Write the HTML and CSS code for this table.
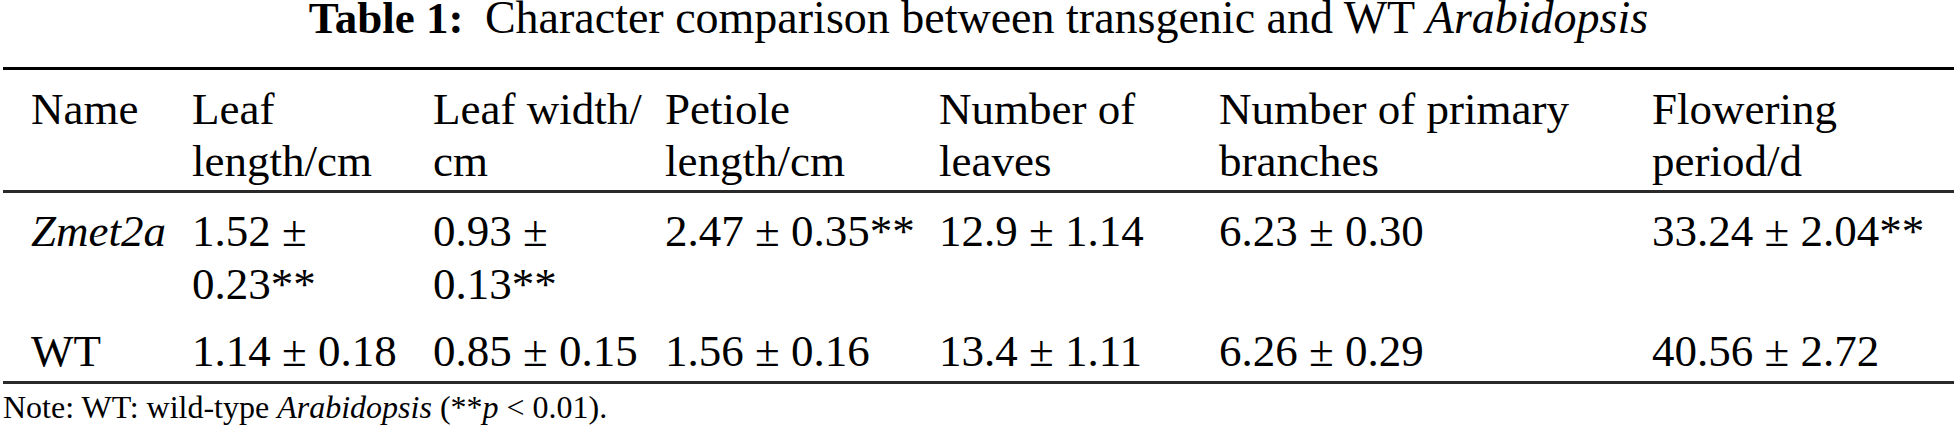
FILE: index.html
```html
<!DOCTYPE html>
<html lang="en">
<head>
  <meta charset="UTF-8">
  <title>Table 1</title>
  <link rel="stylesheet" href="styles.css">
</head>
<body>

  <div class="wrap">
    <h1 class="caption"><b class="label">Table 1:</b> Character comparison between transgenic and WT <i>Arabidopsis</i></h1>

    <table class="traits">
      <colgroup>
        <col class="c-name">
        <col class="c-len">
        <col class="c-wid">
        <col class="c-pet">
        <col class="c-num">
        <col class="c-br">
        <col class="c-fl">
      </colgroup>
      <thead>
        <tr>
          <th>Name</th>
          <th>Leaf length/cm</th>
          <th>Leaf width/ cm</th>
          <th>Petiole length/cm</th>
          <th>Number of leaves</th>
          <th>Number of primary branches</th>
          <th>Flowering period/d</th>
        </tr>
      </thead>
      <tbody>
        <tr>
          <td><i>Zmet2a</i></td>
          <td>1.52 ± 0.23**</td>
          <td>0.93 ± 0.13**</td>
          <td>2.47 ± 0.35**</td>
          <td>12.9 ± 1.14</td>
          <td>6.23 ± 0.30</td>
          <td>33.24 ± 2.04**</td>
        </tr>
        <tr class="last">
          <td>WT</td>
          <td>1.14 ± 0.18</td>
          <td>0.85 ± 0.15</td>
          <td>1.56 ± 0.16</td>
          <td>13.4 ± 1.11</td>
          <td>6.26 ± 0.29</td>
          <td>40.56 ± 2.72</td>
        </tr>
      </tbody>
    </table>

    <p class="note">Note: WT: wild-type <i>Arabidopsis</i> (**<i>p</i> &lt; 0.01).</p>
  </div>

</body>
</html>
```

FILE: styles.css
```css
body {
  margin: 0;
  background-color: #fff;
  color: #000;
  font-family: "Liberation Serif", "Times New Roman", serif;
}

.wrap {
  padding: 0 3px;
}

.caption {
  margin: 0 0 31px 0;
  font-size: 46px;
  font-weight: normal;
  line-height: 36px;
  text-align: center;
}

.label {
  font-size: 45px;
  margin-right: 10px;
}

.traits {
  width: 100%;
  table-layout: fixed;
  border-collapse: separate;
  border-spacing: 0;
  font-size: 45px;
}

.c-name { width: 189px; }
.c-len { width: 241px; }
.c-wid { width: 232px; }
.c-pet { width: 274px; }
.c-num { width: 280px; }
.c-br { width: 433px; }
.c-fl { width: 302px; }

.traits th,
.traits td {
  text-align: left;
  vertical-align: top;
  padding: 12px 8px 3px 0;
}

.traits th:first-child,
.traits td:first-child {
  padding-left: 28px;
}

.traits th {
  font-weight: normal;
  line-height: 52px;
  padding-top: 13px;
  border-top: 3px solid #000;
  border-bottom: 3px solid #2a2a2a;
}

.traits td {
  line-height: 53px;
}

.traits .last td {
  padding-top: 11px;
  border-bottom: 3px solid #2a2a2a;
}

.note {
  margin: 5px 0 0 0;
  font-size: 32px;
  line-height: 36px;
}
```
